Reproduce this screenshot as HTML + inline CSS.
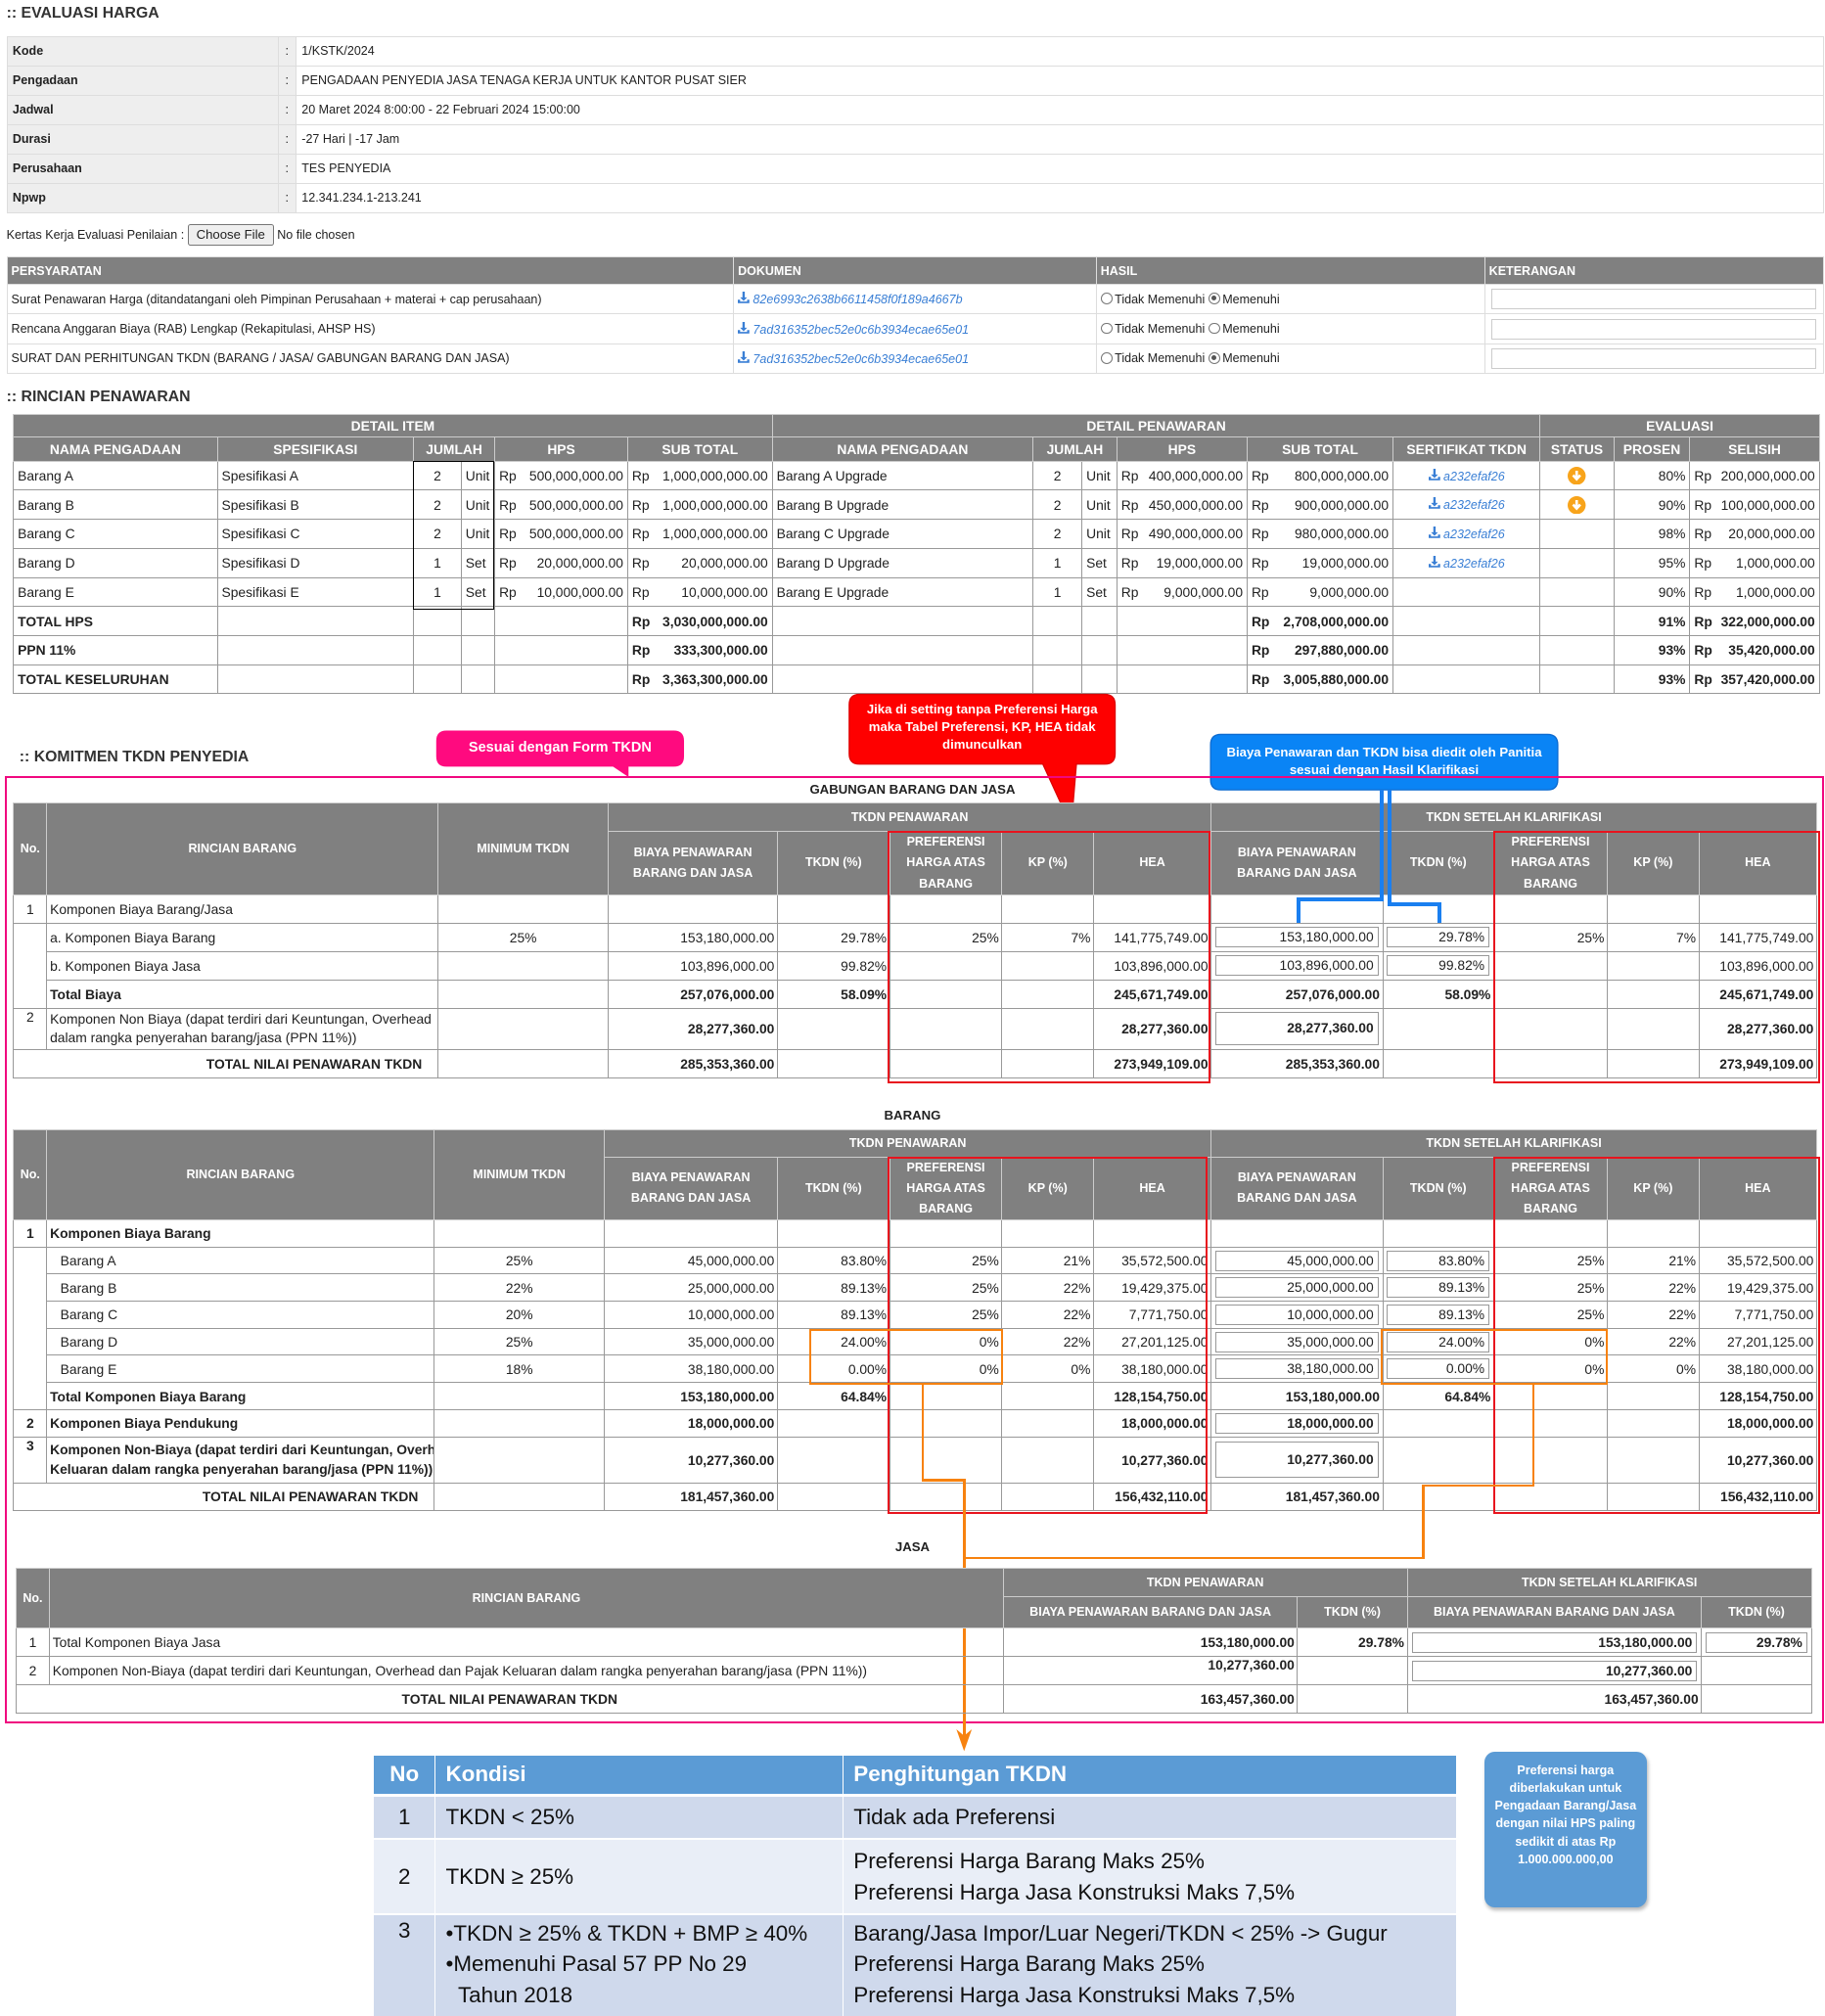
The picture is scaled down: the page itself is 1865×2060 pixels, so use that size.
<!DOCTYPE html>
<html><head><meta charset="utf-8">
<style>
*{box-sizing:border-box;margin:0;padding:0}
html,body{width:1865px;height:2060px;overflow:hidden;background:#fff}
#w{zoom:1.3189;width:1414px;height:1562px;position:relative;font-family:"Liberation Sans",Arial,sans-serif;color:#222}
.a{position:absolute}
.h{font-size:12px;font-weight:bold;color:#333}
table{border-collapse:collapse;table-layout:fixed;position:absolute}
td,th{overflow:hidden;white-space:nowrap}
.info td{font-size:9.5px;border:1px solid #ddd;height:22.7px;padding:0 4px}
.info td.l{background:#eee;font-weight:bold}
.info td.c{background:#eee;text-align:center;padding:0}
.ps th{background:#808080;color:#fff;font-size:9.5px;text-align:left;padding:0 3px;height:21px;border:1px solid #ddd}
.ps td{font-size:9.5px;border:1px solid #ddd;height:23px;padding:0 3px}
.lnk{color:#3a7fd5;font-style:italic}
.rad{display:inline-block;width:9px;height:9px;border:1px solid #777;border-radius:50%;vertical-align:-1px;margin-right:2px;background:#fff;position:relative}
.rad.on::after{content:"";position:absolute;left:1.5px;top:1.5px;width:4px;height:4px;border-radius:50%;background:#555}
.kt{display:block;height:16px;border:1px solid #ccc;margin:0 2px}
.rc th{background:#808080;color:#fff;font-size:10.5px;font-weight:bold;border:1px solid #ccc;text-align:center}
.rc td{font-size:10.5px;border:1px solid #999;padding:0 3px;height:22.5px}
.f{display:flex;justify-content:space-between}
.r{text-align:right}.c{text-align:center}.b{font-weight:bold}
.tk th{background:#808080;color:#fff;font-size:9.5px;font-weight:bold;border:1px solid #ccc;text-align:center;line-height:16px;white-space:normal}
.tk td{font-size:10.5px;border:1px solid #999;padding:0 2px;height:22px}
.tb td{height:21px}
.ib{display:block;border:1px solid #999;height:16px;line-height:14px;text-align:right;padding-right:3px;margin:0 1px}
.box{position:absolute;border:2px solid #e8141e}
.ob{position:absolute;border:2px solid #f7820f}
.ol{position:absolute;background:#f7820f}
.bl{position:absolute;background:#1a7ff0}
.st{display:inline-block;vertical-align:middle}
</style></head><body><div id="w">

<div class="a h" style="left:5px;top:4px">:: EVALUASI HARGA</div>
<table class="info" style="left:5px;top:28px;width:1408px">
<colgroup><col style="width:210px"><col style="width:14px"><col></colgroup>
<tr><td class="l">Kode</td><td class="c">:</td><td>1/KSTK/2024</td></tr>
<tr><td class="l">Pengadaan</td><td class="c">:</td><td>PENGADAAN PENYEDIA JASA TENAGA KERJA UNTUK KANTOR PUSAT SIER</td></tr>
<tr><td class="l">Jadwal</td><td class="c">:</td><td>20 Maret 2024 8:00:00 - 22 Februari 2024 15:00:00</td></tr>
<tr><td class="l">Durasi</td><td class="c">:</td><td>-27 Hari | -17 Jam</td></tr>
<tr><td class="l">Perusahaan</td><td class="c">:</td><td>TES PENYEDIA</td></tr>
<tr><td class="l">Npwp</td><td class="c">:</td><td>12.341.234.1-213.241</td></tr>
</table>
<div class="a" style="left:5px;top:174px;font-size:9.5px;line-height:17px">Kertas Kerja Evaluasi Penilaian : <span style="display:inline-block;border:1px solid #767676;background:#efefef;border-radius:2px;padding:0 6px;font-size:10px;line-height:15px">Choose File</span> No file chosen</div>

<svg width="0" height="0" style="position:absolute"><defs><symbol id="dl" viewBox="0 0 10 10"><path d="M4 0h2v5h2l-3 3l-3-3h2z M0 7h2v1.5h6V7h2v3H0z" fill="#3a7fd5"/></symbol></defs></svg>

<table class="ps" style="left:5px;top:199px;width:1408px">
<colgroup><col style="width:563px"><col style="width:281px"><col style="width:301px"><col></colgroup>
<tr><th>PERSYARATAN</th><th>DOKUMEN</th><th>HASIL</th><th>KETERANGAN</th></tr>
<tr><td>Surat Penawaran Harga (ditandatangani oleh Pimpinan Perusahaan + materai + cap perusahaan)</td><td class="lnk"><svg width="9" height="9"><use href="#dl"/></svg> 82e6993c2638b6611458f0f189a4667b</td><td><span class="rad"></span>Tidak Memenuhi <span class="rad on"></span>Memenuhi</td><td><span class="kt"></span></td></tr>
<tr><td>Rencana Anggaran Biaya (RAB) Lengkap (Rekapitulasi, AHSP HS)</td><td class="lnk"><svg width="9" height="9"><use href="#dl"/></svg> 7ad316352bec52e0c6b3934ecae65e01</td><td><span class="rad"></span>Tidak Memenuhi <span class="rad"></span>Memenuhi</td><td><span class="kt"></span></td></tr>
<tr><td>SURAT DAN PERHITUNGAN TKDN (BARANG / JASA/ GABUNGAN BARANG DAN JASA)</td><td class="lnk"><svg width="9" height="9"><use href="#dl"/></svg> 7ad316352bec52e0c6b3934ecae65e01</td><td><span class="rad"></span>Tidak Memenuhi <span class="rad on"></span>Memenuhi</td><td><span class="kt"></span></td></tr>
</table>

<div class="a h" style="left:5px;top:301px">:: RINCIAN PENAWARAN</div>
<table class="rc" style="left:10px;top:321px;width:1400px">
<colgroup><col style="width:158px"><col style="width:152px"><col style="width:37px"><col style="width:26px"><col style="width:103px"><col style="width:112px"><col style="width:202px"><col style="width:38px"><col style="width:27px"><col style="width:101px"><col style="width:113px"><col style="width:114px"><col style="width:57px"><col style="width:59px"><col></colgroup>
<tr style="height:17px"><th colspan="6">DETAIL ITEM</th><th colspan="6">DETAIL PENAWARAN</th><th colspan="3">EVALUASI</th></tr>
<tr style="height:19px"><th>NAMA PENGADAAN</th><th>SPESIFIKASI</th><th colspan="2">JUMLAH</th><th>HPS</th><th>SUB TOTAL</th><th>NAMA PENGADAAN</th><th colspan="2">JUMLAH</th><th>HPS</th><th>SUB TOTAL</th><th>SERTIFIKAT TKDN</th><th>STATUS</th><th>PROSEN</th><th>SELISIH</th></tr>
<tr><td>Barang A</td><td>Spesifikasi A</td><td class="c">2</td><td>Unit</td><td><div class="f"><span>Rp</span><span>500,000,000.00</span></div></td><td><div class="f"><span>Rp</span><span>1,000,000,000.00</span></div></td><td>Barang A Upgrade</td><td class="c">2</td><td>Unit</td><td><div class="f"><span>Rp</span><span>400,000,000.00</span></div></td><td><div class="f"><span>Rp</span><span>800,000,000.00</span></div></td><td class="c lnk" style="font-size:9.5px"><svg width="9" height="9"><use href="#dl"/></svg> a232efaf26</td><td class="c"><svg class="st" width="14" height="14" viewBox="0 0 14 14"><circle cx="7" cy="7" r="7" fill="#f8a41b"/><path d="M7 3v6M4.2 6.5L7 9.5l2.8-3" stroke="#fff" stroke-width="2" fill="none"/></svg></td><td class="r">80%</td><td><div class="f"><span>Rp</span><span>200,000,000.00</span></div></td></tr>
<tr><td>Barang B</td><td>Spesifikasi B</td><td class="c">2</td><td>Unit</td><td><div class="f"><span>Rp</span><span>500,000,000.00</span></div></td><td><div class="f"><span>Rp</span><span>1,000,000,000.00</span></div></td><td>Barang B Upgrade</td><td class="c">2</td><td>Unit</td><td><div class="f"><span>Rp</span><span>450,000,000.00</span></div></td><td><div class="f"><span>Rp</span><span>900,000,000.00</span></div></td><td class="c lnk" style="font-size:9.5px"><svg width="9" height="9"><use href="#dl"/></svg> a232efaf26</td><td class="c"><svg class="st" width="14" height="14" viewBox="0 0 14 14"><circle cx="7" cy="7" r="7" fill="#f8a41b"/><path d="M7 3v6M4.2 6.5L7 9.5l2.8-3" stroke="#fff" stroke-width="2" fill="none"/></svg></td><td class="r">90%</td><td><div class="f"><span>Rp</span><span>100,000,000.00</span></div></td></tr>
<tr><td>Barang C</td><td>Spesifikasi C</td><td class="c">2</td><td>Unit</td><td><div class="f"><span>Rp</span><span>500,000,000.00</span></div></td><td><div class="f"><span>Rp</span><span>1,000,000,000.00</span></div></td><td>Barang C Upgrade</td><td class="c">2</td><td>Unit</td><td><div class="f"><span>Rp</span><span>490,000,000.00</span></div></td><td><div class="f"><span>Rp</span><span>980,000,000.00</span></div></td><td class="c lnk" style="font-size:9.5px"><svg width="9" height="9"><use href="#dl"/></svg> a232efaf26</td><td></td><td class="r">98%</td><td><div class="f"><span>Rp</span><span>20,000,000.00</span></div></td></tr>
<tr><td>Barang D</td><td>Spesifikasi D</td><td class="c">1</td><td>Set</td><td><div class="f"><span>Rp</span><span>20,000,000.00</span></div></td><td><div class="f"><span>Rp</span><span>20,000,000.00</span></div></td><td>Barang D Upgrade</td><td class="c">1</td><td>Set</td><td><div class="f"><span>Rp</span><span>19,000,000.00</span></div></td><td><div class="f"><span>Rp</span><span>19,000,000.00</span></div></td><td class="c lnk" style="font-size:9.5px"><svg width="9" height="9"><use href="#dl"/></svg> a232efaf26</td><td></td><td class="r">95%</td><td><div class="f"><span>Rp</span><span>1,000,000.00</span></div></td></tr>
<tr><td>Barang E</td><td>Spesifikasi E</td><td class="c">1</td><td>Set</td><td><div class="f"><span>Rp</span><span>10,000,000.00</span></div></td><td><div class="f"><span>Rp</span><span>10,000,000.00</span></div></td><td>Barang E Upgrade</td><td class="c">1</td><td>Set</td><td><div class="f"><span>Rp</span><span>9,000,000.00</span></div></td><td><div class="f"><span>Rp</span><span>9,000,000.00</span></div></td><td></td><td></td><td class="r">90%</td><td><div class="f"><span>Rp</span><span>1,000,000.00</span></div></td></tr>
<tr class="b"><td>TOTAL HPS</td><td></td><td></td><td></td><td></td><td><div class="f"><span>Rp</span><span>3,030,000,000.00</span></div></td><td></td><td></td><td></td><td></td><td><div class="f"><span>Rp</span><span>2,708,000,000.00</span></div></td><td></td><td></td><td class="r">91%</td><td><div class="f"><span>Rp</span><span>322,000,000.00</span></div></td></tr>
<tr class="b"><td>PPN 11%</td><td></td><td></td><td></td><td></td><td><div class="f"><span>Rp</span><span>333,300,000.00</span></div></td><td></td><td></td><td></td><td></td><td><div class="f"><span>Rp</span><span>297,880,000.00</span></div></td><td></td><td></td><td class="r">93%</td><td><div class="f"><span>Rp</span><span>35,420,000.00</span></div></td></tr>
<tr class="b"><td>TOTAL KESELURUHAN</td><td></td><td></td><td></td><td></td><td><div class="f"><span>Rp</span><span>3,363,300,000.00</span></div></td><td></td><td></td><td></td><td></td><td><div class="f"><span>Rp</span><span>3,005,880,000.00</span></div></td><td></td><td></td><td class="r">93%</td><td><div class="f"><span>Rp</span><span>357,420,000.00</span></div></td></tr>
</table>
<div class="a" style="left:320px;top:357px;width:63px;height:115px;border:1.5px solid #000"></div>

<!-- callouts -->
<div class="a h" style="left:15px;top:580px">:: KOMITMEN TKDN PENYEDIA</div>
<svg class="a" style="left:0;top:530px" width="1414" height="120">
<path d="M346 36 h176 q8 0 8 8 v12 q0 8 -8 8 h-35 l0 8 l-12 -8 h-129 q-8 0 -8 -8 v-12 q0 -8 8 -8z" fill="#ff0a7f"/>
<path d="M666 8 h190 q8 0 8 8 v38 q0 8 -8 8 h-22 l-4 48 l-22 -48 h-142 q-8 0 -8 -8 v-38 q0 -8 8 -8z" fill="#fe0000" stroke="#d00" stroke-width="1"/>
<path d="M946 39 h253 q8 0 8 8 v27 q0 8 -8 8 h-253 q-8 0 -8 -8 v-27 q0 -8 8 -8z" fill="#0a84f5" stroke="#0d6bd0"/>
</svg>
<div class="a" style="left:338px;top:566px;width:192px;height:28px;line-height:28px;text-align:center;color:#fff;font-weight:bold;font-size:11px">Sesuai dengan Form TKDN</div>
<div class="a" style="left:668px;top:543px;width:186px;text-align:center;color:#fff;font-weight:bold;font-size:10px;line-height:13.5px">Jika di setting tanpa Preferensi Harga maka Tabel Preferensi, KP, HEA tidak dimunculkan</div>
<div class="a" style="left:948px;top:576px;width:249px;text-align:center;color:#fff;font-weight:bold;font-size:10px;line-height:14px">Biaya Penawaran dan TKDN bisa diedit oleh Panitia sesuai dengan Hasil Klarifikasi</div>

<div class="a" style="left:4px;top:601px;width:1409px;height:734px;border:2px solid #f0087f"></div>

<div class="a b" style="left:0;top:606px;width:1414px;text-align:center;font-size:10px">GABUNGAN BARANG DAN JASA</div>
<table class="tk" style="left:10px;top:622px;width:1398px">
<colgroup><col style="width:26px"><col style="width:303px"><col style="width:132px"><col style="width:131px"><col style="width:87px"><col style="width:87px"><col style="width:71px"><col style="width:91px"><col style="width:133px"><col style="width:86px"><col style="width:88px"><col style="width:71px"><col></colgroup>
<tr style="height:22px"><th rowspan="2">No.</th><th rowspan="2">RINCIAN BARANG</th><th rowspan="2">MINIMUM TKDN</th><th colspan="5">TKDN PENAWARAN</th><th colspan="5">TKDN SETELAH KLARIFIKASI</th></tr>
<tr style="height:47px"><th>BIAYA PENAWARAN BARANG DAN JASA</th><th>TKDN (%)</th><th>PREFERENSI HARGA ATAS BARANG</th><th>KP (%)</th><th>HEA</th><th>BIAYA PENAWARAN BARANG DAN JASA</th><th>TKDN (%)</th><th>PREFERENSI HARGA ATAS BARANG</th><th>KP (%)</th><th>HEA</th></tr>
<tr><td class="c">1</td><td>Komponen Biaya Barang/Jasa</td><td></td><td></td><td></td><td></td><td></td><td></td><td></td><td></td><td></td><td></td><td></td></tr>
<tr><td rowspan="3"></td><td>a. Komponen Biaya Barang</td><td class="c">25%</td><td class="r">153,180,000.00</td><td class="r">29.78%</td><td class="r">25%</td><td class="r">7%</td><td class="r">141,775,749.00</td><td><span class="ib">153,180,000.00</span></td><td><span class="ib">29.78%</span></td><td class="r">25%</td><td class="r">7%</td><td class="r">141,775,749.00</td></tr>
<tr><td>b. Komponen Biaya Jasa</td><td></td><td class="r">103,896,000.00</td><td class="r">99.82%</td><td></td><td></td><td class="r">103,896,000.00</td><td><span class="ib">103,896,000.00</span></td><td><span class="ib">99.82%</span></td><td></td><td></td><td class="r">103,896,000.00</td></tr>
<tr class="b"><td>Total Biaya</td><td></td><td class="r">257,076,000.00</td><td class="r">58.09%</td><td></td><td></td><td class="r">245,671,749.00</td><td class="r">257,076,000.00</td><td class="r">58.09%</td><td></td><td></td><td class="r">245,671,749.00</td></tr>
<tr style="height:32px"><td class="c" style="vertical-align:top">2</td><td style="line-height:15px">Komponen Non Biaya (dapat terdiri dari Keuntungan, Overhead<br>dalam rangka penyerahan barang/jasa (PPN 11%))</td><td></td><td class="r b">28,277,360.00</td><td></td><td></td><td></td><td class="r b">28,277,360.00</td><td><span class="ib b" style="height:26px;line-height:24px">28,277,360.00</span></td><td></td><td></td><td></td><td class="r b">28,277,360.00</td></tr>
<tr class="b"><td colspan="2" class="r" style="padding-right:12px">TOTAL NILAI PENAWARAN TKDN</td><td></td><td class="r">285,353,360.00</td><td></td><td></td><td></td><td class="r">273,949,109.00</td><td class="r">285,353,360.00</td><td></td><td></td><td></td><td class="r">273,949,109.00</td></tr>
</table>
<div class="box" style="left:688px;top:644px;width:250px;height:195px"></div>
<div class="box" style="left:1157px;top:644px;width:253px;height:195px"></div>
<div class="bl" style="left:1069px;top:612px;width:3px;height:84px"></div>
<div class="bl" style="left:1075px;top:612px;width:3px;height:88px"></div>
<div class="bl" style="left:1005px;top:695px;width:67px;height:3px"></div>
<div class="bl" style="left:1005px;top:695px;width:3px;height:20px"></div>
<div class="bl" style="left:1075px;top:699px;width:42px;height:3px"></div>
<div class="bl" style="left:1114px;top:699px;width:3px;height:16px"></div>

<div class="a b" style="left:0;top:858px;width:1414px;text-align:center;font-size:10px">BARANG</div>
<table class="tk tb" style="left:10px;top:875px;width:1398px">
<colgroup><col style="width:26px"><col style="width:300px"><col style="width:132px"><col style="width:134px"><col style="width:87px"><col style="width:87px"><col style="width:71px"><col style="width:91px"><col style="width:133px"><col style="width:86px"><col style="width:88px"><col style="width:71px"><col></colgroup>
<tr style="height:21px"><th rowspan="2">No.</th><th rowspan="2">RINCIAN BARANG</th><th rowspan="2">MINIMUM TKDN</th><th colspan="5">TKDN PENAWARAN</th><th colspan="5">TKDN SETELAH KLARIFIKASI</th></tr>
<tr style="height:47px"><th>BIAYA PENAWARAN BARANG DAN JASA</th><th>TKDN (%)</th><th>PREFERENSI HARGA ATAS BARANG</th><th>KP (%)</th><th>HEA</th><th>BIAYA PENAWARAN BARANG DAN JASA</th><th>TKDN (%)</th><th>PREFERENSI HARGA ATAS BARANG</th><th>KP (%)</th><th>HEA</th></tr>
<tr class="b"><td class="c">1</td><td>Komponen Biaya Barang</td><td></td><td></td><td></td><td></td><td></td><td></td><td></td><td></td><td></td><td></td><td></td></tr>
<tr><td rowspan="6"></td><td style="padding-left:10px">Barang A</td><td class="c">25%</td><td class="r">45,000,000.00</td><td class="r">83.80%</td><td class="r">25%</td><td class="r">21%</td><td class="r">35,572,500.00</td><td><span class="ib">45,000,000.00</span></td><td><span class="ib">83.80%</span></td><td class="r">25%</td><td class="r">21%</td><td class="r">35,572,500.00</td></tr>
<tr><td style="padding-left:10px">Barang B</td><td class="c">22%</td><td class="r">25,000,000.00</td><td class="r">89.13%</td><td class="r">25%</td><td class="r">22%</td><td class="r">19,429,375.00</td><td><span class="ib">25,000,000.00</span></td><td><span class="ib">89.13%</span></td><td class="r">25%</td><td class="r">22%</td><td class="r">19,429,375.00</td></tr>
<tr><td style="padding-left:10px">Barang C</td><td class="c">20%</td><td class="r">10,000,000.00</td><td class="r">89.13%</td><td class="r">25%</td><td class="r">22%</td><td class="r">7,771,750.00</td><td><span class="ib">10,000,000.00</span></td><td><span class="ib">89.13%</span></td><td class="r">25%</td><td class="r">22%</td><td class="r">7,771,750.00</td></tr>
<tr><td style="padding-left:10px">Barang D</td><td class="c">25%</td><td class="r">35,000,000.00</td><td class="r">24.00%</td><td class="r">0%</td><td class="r">22%</td><td class="r">27,201,125.00</td><td><span class="ib">35,000,000.00</span></td><td><span class="ib">24.00%</span></td><td class="r">0%</td><td class="r">22%</td><td class="r">27,201,125.00</td></tr>
<tr><td style="padding-left:10px">Barang E</td><td class="c">18%</td><td class="r">38,180,000.00</td><td class="r">0.00%</td><td class="r">0%</td><td class="r">0%</td><td class="r">38,180,000.00</td><td><span class="ib">38,180,000.00</span></td><td><span class="ib">0.00%</span></td><td class="r">0%</td><td class="r">0%</td><td class="r">38,180,000.00</td></tr>
<tr class="b"><td>Total Komponen Biaya Barang</td><td></td><td class="r">153,180,000.00</td><td class="r">64.84%</td><td></td><td></td><td class="r">128,154,750.00</td><td class="r">153,180,000.00</td><td class="r">64.84%</td><td></td><td></td><td class="r">128,154,750.00</td></tr>
<tr class="b"><td class="c">2</td><td>Komponen Biaya Pendukung</td><td></td><td class="r">18,000,000.00</td><td></td><td></td><td></td><td class="r">18,000,000.00</td><td><span class="ib">18,000,000.00</span></td><td></td><td></td><td></td><td class="r">18,000,000.00</td></tr>
<tr class="b"><td class="c" style="vertical-align:top;height:36px">3</td><td style="line-height:15px">Komponen Non-Biaya (dapat terdiri dari Keuntungan, Overhead<br>Keluaran dalam rangka penyerahan barang/jasa (PPN 11%))</td><td></td><td class="r">10,277,360.00</td><td></td><td></td><td></td><td class="r">10,277,360.00</td><td><span class="ib" style="height:28px;line-height:26px">10,277,360.00</span></td><td></td><td></td><td></td><td class="r">10,277,360.00</td></tr>
<tr class="b"><td colspan="2" class="r" style="padding-right:12px">TOTAL NILAI PENAWARAN TKDN</td><td></td><td class="r">181,457,360.00</td><td></td><td></td><td></td><td class="r">156,432,110.00</td><td class="r">181,457,360.00</td><td></td><td></td><td></td><td class="r">156,432,110.00</td></tr>
</table>
<div class="box" style="left:688px;top:896px;width:248px;height:277px"></div>
<div class="box" style="left:1157px;top:896px;width:253px;height:277px"></div>
<div class="ob" style="left:627px;top:1030px;width:150px;height:43px"></div>
<div class="ob" style="left:1070px;top:1030px;width:176px;height:43px"></div>
<div class="ol" style="left:714px;top:1072px;width:2px;height:76px"></div>
<div class="ol" style="left:714px;top:1146px;width:34px;height:2px"></div>
<div class="ol" style="left:746px;top:1146px;width:2px;height:200px"></div>
<div class="ol" style="left:1187px;top:1072px;width:2px;height:80px"></div>
<div class="ol" style="left:1102px;top:1150px;width:87px;height:2px"></div>
<div class="ol" style="left:1102px;top:1150px;width:2px;height:58px"></div>
<div class="ol" style="left:746px;top:1206px;width:358px;height:2px"></div>
<svg class="a" style="left:740px;top:1340px" width="14" height="18"><path d="M1 0 L7 17 L13 0 L7 5z" fill="#f7820f"/></svg>

<div class="a b" style="left:0;top:1193px;width:1414px;text-align:center;font-size:10px">JASA</div>
<table class="tk" style="left:12px;top:1215px;width:1392px">
<colgroup><col style="width:26px"><col style="width:739px"><col style="width:228px"><col style="width:85px"><col style="width:228px"><col></colgroup>
<tr style="height:22px"><th rowspan="2">No.</th><th rowspan="2">RINCIAN BARANG</th><th colspan="2">TKDN PENAWARAN</th><th colspan="2">TKDN SETELAH KLARIFIKASI</th></tr>
<tr style="height:24px"><th>BIAYA PENAWARAN BARANG DAN JASA</th><th>TKDN (%)</th><th>BIAYA PENAWARAN BARANG DAN JASA</th><th>TKDN (%)</th></tr>
<tr><td class="c" style="height:22px">1</td><td>Total Komponen Biaya Jasa</td><td class="r b">153,180,000.00</td><td class="r b">29.78%</td><td><span class="ib b">153,180,000.00</span></td><td><span class="ib b">29.78%</span></td></tr>
<tr><td class="c" style="height:21px">2</td><td>Komponen Non-Biaya (dapat terdiri dari Keuntungan, Overhead dan Pajak Keluaran dalam rangka penyerahan barang/jasa (PPN 11%))</td><td class="r b" style="vertical-align:top">10,277,360.00</td><td></td><td><span class="ib b">10,277,360.00</span></td><td></td></tr>
<tr class="b"><td colspan="2" class="c" style="height:22px">TOTAL NILAI PENAWARAN TKDN</td><td class="r">163,457,360.00</td><td></td><td class="r">163,457,360.00</td><td></td></tr>
</table>

<!-- bottom table -->
<table style="left:290px;top:1360px;width:838px;font-size:17px;color:#111">
<colgroup><col style="width:47px"><col style="width:316px"><col></colgroup>
<tr style="height:31px;background:#5b9bd5;color:#fff;font-weight:bold"><td class="c" style="border-right:1px solid #fff">No</td><td style="padding-left:8px;border-right:1px solid #fff">Kondisi</td><td style="padding-left:8px">Penghitungan TKDN</td></tr>
<tr style="height:34px;background:#cfd9ec;border-top:3px solid #fff"><td class="c" style="border-right:1px solid #fff">1</td><td style="padding-left:8px;border-right:1px solid #fff">TKDN &lt; 25%</td><td style="padding-left:8px">Tidak ada Preferensi</td></tr>
<tr style="height:58px;background:#e9eef7;border-top:2px solid #fff"><td class="c" style="border-right:1px solid #fff">2</td><td style="padding-left:8px;border-right:1px solid #fff">TKDN ≥ 25%</td><td style="padding-left:8px;line-height:24px">Preferensi Harga Barang Maks 25%<br>Preferensi Harga Jasa Konstruksi Maks 7,5%</td></tr>
<tr style="height:79px;background:#cfd9ec;border-top:2px solid #fff"><td class="c" style="border-right:1px solid #fff;vertical-align:top;padding-top:2px">3</td><td style="padding-left:8px;border-right:1px solid #fff;line-height:24px;vertical-align:top;padding-top:2px">•TKDN ≥ 25% &amp; TKDN + BMP ≥ 40%<br>•Memenuhi Pasal 57 PP No 29<br>&nbsp;&nbsp;Tahun 2018</td><td style="padding-left:8px;line-height:24px;vertical-align:top;padding-top:2px">Barang/Jasa Impor/Luar Negeri/TKDN &lt; 25% -&gt; Gugur<br>Preferensi Harga Barang Maks 25%<br>Preferensi Harga Jasa Konstruksi Maks 7,5%</td></tr>
</table>
<div class="a" style="left:1150px;top:1357px;width:126px;height:121px;background:#5b9bd5;border-radius:8px;box-shadow:1px 2px 3px #bbb;color:#fff;font-weight:bold;font-size:9.5px;line-height:13.7px;text-align:center;padding:8px 6px 0">Preferensi harga diberlakukan untuk Pengadaan Barang/Jasa dengan nilai HPS paling sedikit di atas Rp 1.000.000.000,00</div>

</div></body></html>
